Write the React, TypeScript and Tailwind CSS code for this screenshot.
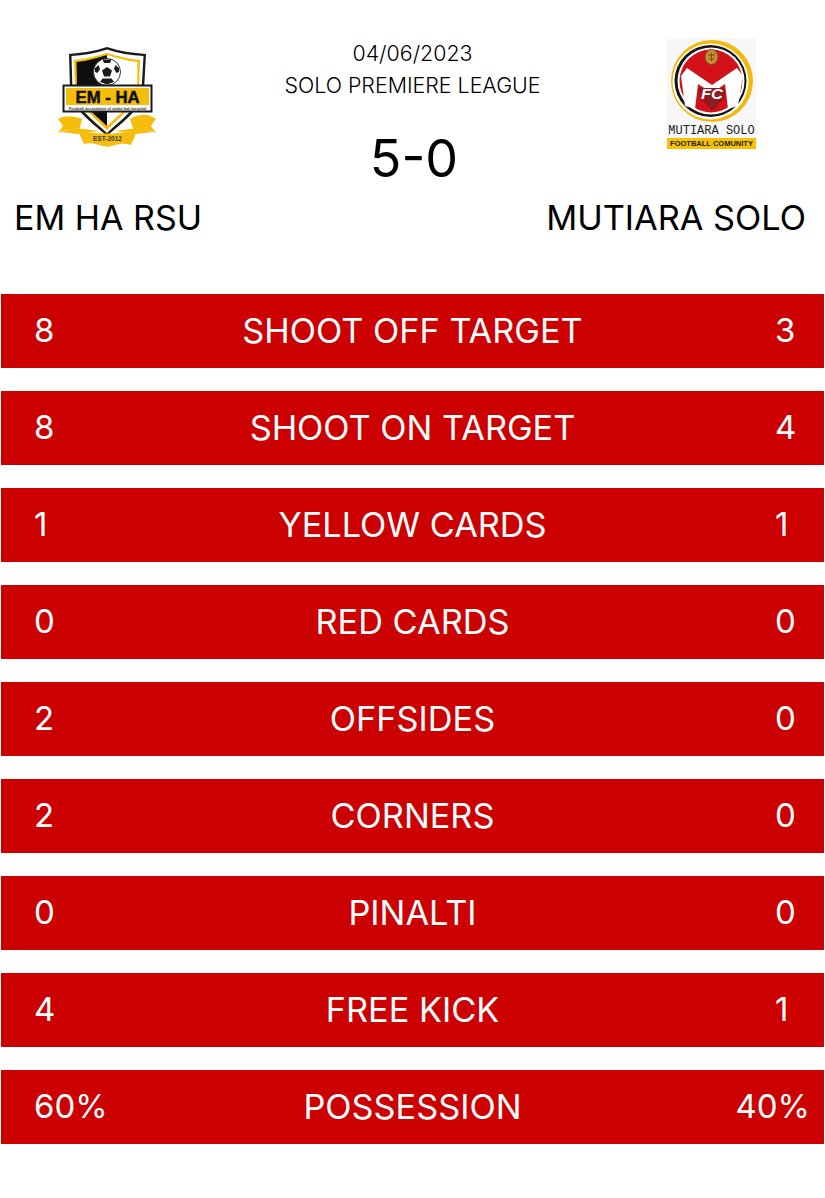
const stats = [
  { home: "8", label: "SHOOT OFF TARGET", away: "3" },
  { home: "8", label: "SHOOT ON TARGET", away: "4" },
  { home: "1", label: "YELLOW CARDS", away: "1" },
  { home: "0", label: "RED CARDS", away: "0" },
  { home: "2", label: "OFFSIDES", away: "0" },
  { home: "2", label: "CORNERS", away: "0" },
  { home: "0", label: "PINALTI", away: "0" },
  { home: "4", label: "FREE KICK", away: "1" },
  { home: "60%", label: "POSSESSION", away: "40%" },
];

const EmHaLogo = () => (
  <svg viewBox="0 0 100 104" className="h-[104px] w-[100px]">
    {/* shield */}
    <path d="M50 1 C38 5 24 7 12 8 L13 44 C14 62 34 76 50 90 C66 76 86 62 87 44 L89 8 C76 7 62 5 50 1Z" fill="#1a1a1a" />
    <path d="M50 3.5 C39 7 26 9.500 14.500 10 L15.500 44 C17 60 36 74 50 87 C64 74 83 60 84.500 44 L86.500 10 C74 9.500 61 7 50 3.500Z" fill="#fff" />
    <path d="M50 7 C40 10 28 13 17 14 L18 44 C20 58 38 72 50 84 C62 72 80 58 82 44 L83 14 C72 13 60 10 50 7Z" fill="#f5bd0d" />
    <path d="M50 9 L50 80 C38 69 23 57 20 44 L19.500 16 C30 15 40 12 50 9Z" fill="#0e0e0e" />
    <path d="M50 9 L50 80 C62 69 77 57 80 44 L80.500 16 C70 15 60 12 50 9Z" fill="#fff" />
    {/* ball */}
    <circle cx="50" cy="26" r="13.500" fill="#fff" stroke="#333" strokeWidth="1" />
    <path d="M50 21 l5 3.500 -2 6 h-6 l-2 -6Z" fill="#1c1c1c" />
    <path d="M45.500 13.500 h9 l-1.500 3.500 h-6Z M38 22 l3.500 -3 1.500 4 -2.500 4 -2.500 -1Z M62 22 l-3.500 -3 -1.500 4 2.500 4 2.500 -1Z M43 36 l2.500 -3.500 h9 l2.500 3.500 -7 2.500Z" fill="#1c1c1c" />
    {/* name band */}
    <rect x="6.500" y="39.500" width="88" height="26" fill="#fff" stroke="#1a1a1a" strokeWidth="2" />
    <rect x="9" y="42" width="83" height="17" fill="#f5bd0d" />
    <text x="50.500" y="57" textAnchor="middle" textLength="64" lengthAdjust="spacingAndGlyphs" fontFamily="Liberation Sans, sans-serif" fontWeight="700" fontSize="16" fill="#111" stroke="#111" strokeWidth="0.5">
      EM - HA
    </text>
    <text x="50.500" y="63.500" textAnchor="middle" fontFamily="Liberation Sans, sans-serif" fontWeight="700" fontSize="3.900" fill="#333">
      Football association of muka hati hospital
    </text>
    {/* ribbons */}
    <path d="M1 73 C8 69 17 70 25 73 L22 85 L14 84 C10 83 6 85 1 87 L6 80Z" fill="#f5bd0d" />
    <path d="M99 73 C92 68 83 67 73 73 L77 85 L86 84 C90 83 94 85 99 87 L94 80Z" fill="#f5bd0d" />
    <path d="M4 86 C12 82 24 82 34 84 L42 85 L20 88Z" fill="#f5bd0d" />
    <path d="M96 86 C88 82 76 82 66 84 L58 85 L80 88Z" fill="#f5bd0d" />
    <path d="M20 83 C32 89 68 89 81 83 L74 99 C64 96 60 99 50 101 C40 99 34 96 27 98Z" fill="#f5bd0d" />
    <text x="50.500" y="95" textAnchor="middle" textLength="29" lengthAdjust="spacingAndGlyphs" fontFamily="Liberation Sans, sans-serif" fontWeight="700" fontSize="8" fill="#3a3a2a">
      EST-2012
    </text>
  </svg>
);

const MutiaraLogo = () => (
  <div className="flex h-[110px] w-[89px] flex-col items-center bg-[#f7f7f7]">
    <svg viewBox="0 0 89 86" className="h-[86px] w-[89px] shrink-0">
      <circle cx="45" cy="43" r="41" fill="#f2b90c" />
      <circle cx="43.500" cy="43.500" r="38" fill="#fff" />
      <circle cx="43.500" cy="43" r="36" fill="#141414" />
      <circle cx="44" cy="43" r="33.500" fill="#fff" />
      <circle cx="44" cy="43" r="31.500" fill="#d3111a" />
      {/* M mark */}
      <path d="M20 30 L45 47 L70 30 L76 38 L71 68 L61 71 L58 46 L45 55 L31 46 L28 71 L18 68 L14 38Z" fill="#fff" />
      <path d="M31 50 L58 50 L58 59 L45 73 L33 59Z" fill="#8f1a20" />
      <text x="45" y="61" textAnchor="middle" textLength="22" lengthAdjust="spacingAndGlyphs" fontFamily="Liberation Sans, sans-serif" fontWeight="700" fontStyle="italic" fontSize="14" fill="#fff">
        FC
      </text>
      {/* lion */}
      <ellipse cx="44.500" cy="19" rx="6.500" ry="7.500" fill="#c98a35" stroke="#80501c" strokeWidth="1" />
      <path d="M41 17 h7 M42 21 h5 M44.500 15 v8" stroke="#7a4a18" strokeWidth="1" fill="none" />
    </svg>
    <div className="mt-[1px] h-[12px] font-['Liberation_Mono',monospace] text-[12px] leading-[12px] whitespace-nowrap text-[#222]">
      MUTIARA SOLO
    </div>
    <div className="mt-[1px] flex h-[11px] w-full items-center justify-center bg-[#f7c100] font-['Liberation_Sans',sans-serif] text-[7.500px] font-bold whitespace-nowrap text-[#222]">
      FOOTBALL COMUNITY
    </div>
  </div>
);

export default function App() {
  return (
    <div className="h-[1198px] w-[825px] bg-white font-['Inter',sans-serif] text-black">
      <header className="flex h-[294px] flex-col">
        <div className="grid h-[198px] grid-cols-[1fr_auto_1fr] pt-[37px]">
          <div className="ml-[57px] w-[100px] pt-[9px]">
            <EmHaLogo />
          </div>
          <div className="flex flex-col items-center">
            <p className="text-[21.400px] leading-[32px] font-light">04/06/2023</p>
            <p className="text-[21.400px] leading-[32px] font-light">SOLO PREMIERE LEAGUE</p>
            <p className="mt-[26px] pl-[3px] text-[52px] leading-[63px] font-normal">5-0</p>
          </div>
          <div className="mr-[69px] justify-self-end pt-[1px]">
            <MutiaraLogo />
          </div>
        </div>
        <div className="flex justify-between pr-[19px] pl-[14px]">
          <span className="text-[34px] leading-[40px]">EM HA RSU</span>
          <span className="text-[34.300px] leading-[40px]">MUTIARA SOLO</span>
        </div>
      </header>
      <main className="flex flex-col gap-[23px] px-[1px]">
        {stats.map((row) => (
          <div key={row.label} className="grid h-[74px] grid-cols-[1fr_auto_1fr] items-center bg-[#cc0000] px-[14px] text-white">
            <span className="pl-[19px] text-[33px]">{row.home}</span>
            <span className="text-center text-[34.300px]">{row.label}</span>
            <span className={row.away.length > 1 ? "justify-self-end text-[33px]" : "w-[35px] justify-self-end text-[33px]"}>{row.away}</span>
          </div>
        ))}
      </main>
    </div>
  );
}
